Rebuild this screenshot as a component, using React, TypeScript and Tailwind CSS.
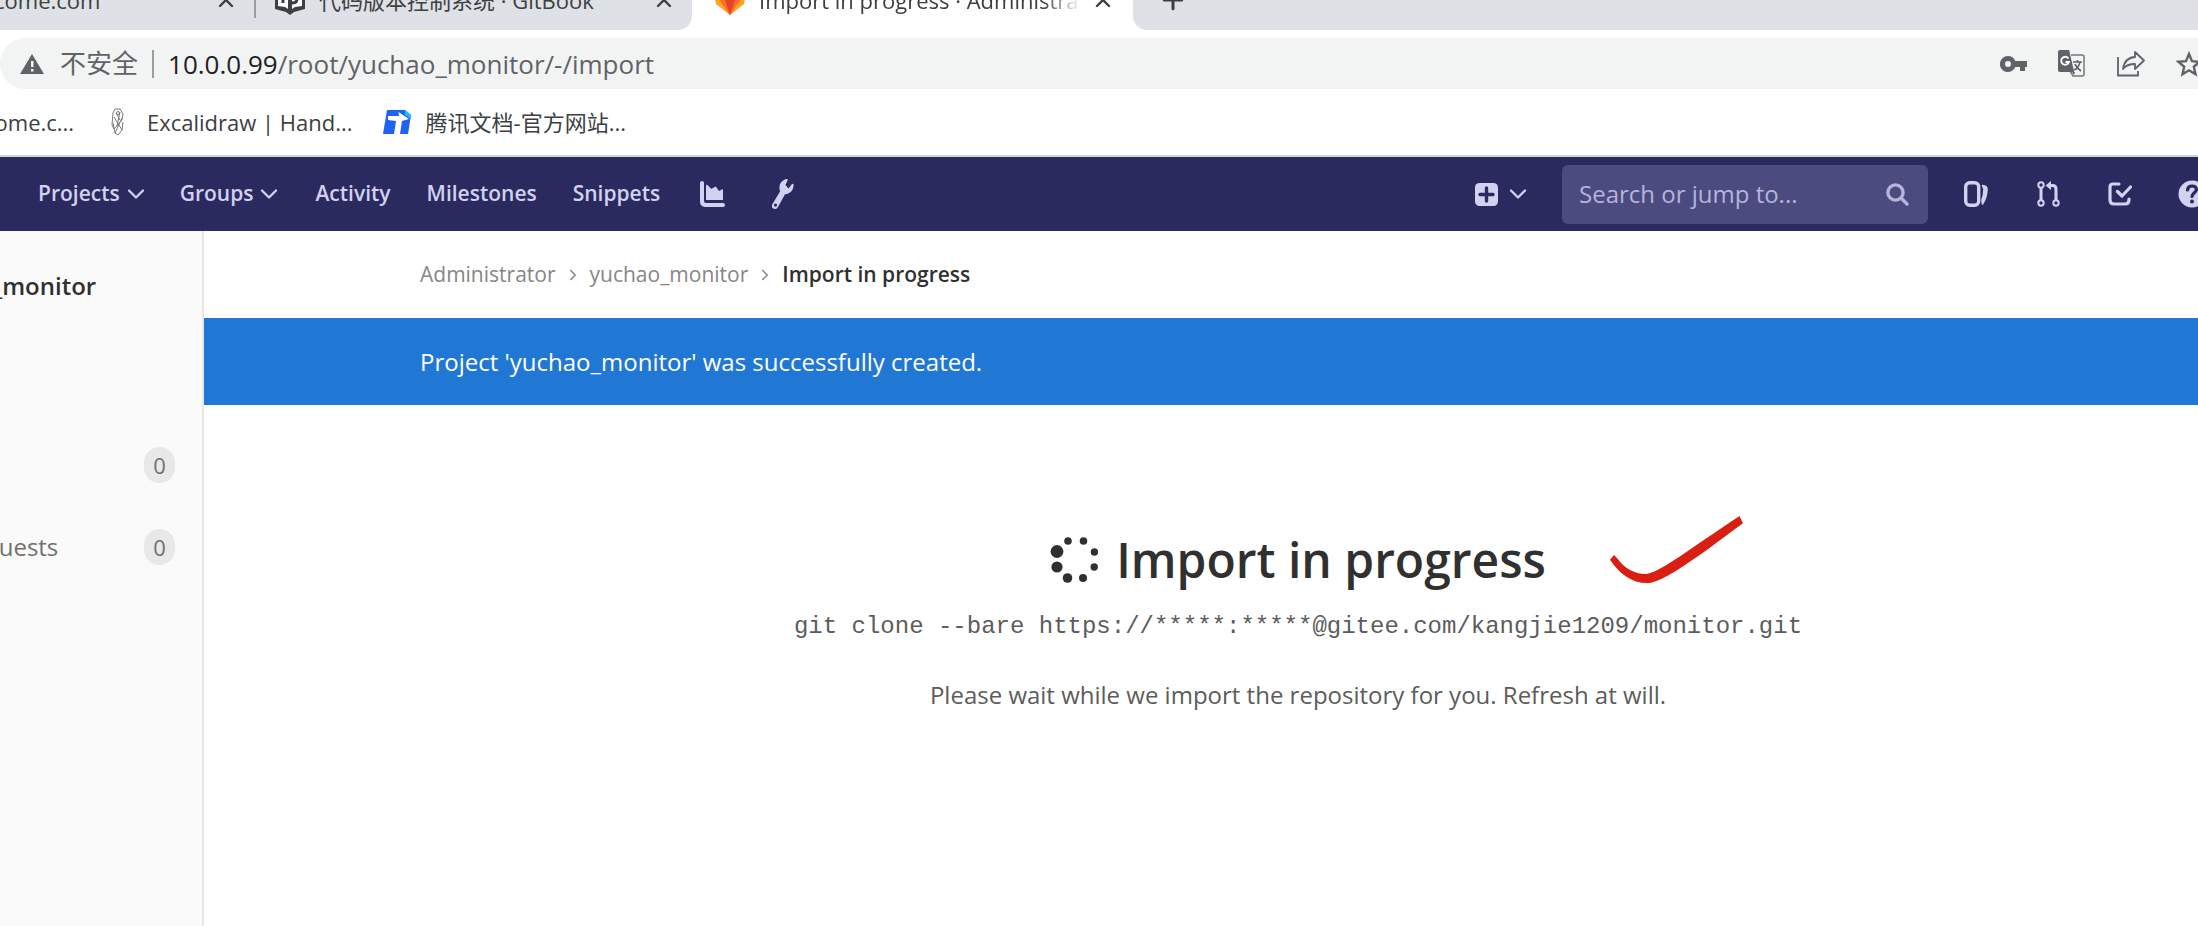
import React from 'react';
import { ChevronDown, ChevronRight, Plus, X } from 'lucide-react';

const sans = "font-['Open_Sans','Noto_Sans_CJK_SC',sans-serif]";

function GitBookIcon() {
  return (
    <svg width="30" height="28" viewBox="0 0 30 28" fill="none" className="shrink-0">
      <path d="M0 0h30v22l-11 3-4 3-4-3-11-3z" fill="#3c4043" />
      <path d="M3 0h10v22l-3-2-7-1zM27 0H17v22l3-2 7-1z" fill="#fff" />
      <path d="M8 0v16M22 0v12q0 4-5 4" stroke="#3c4043" strokeWidth="3" />
    </svg>
  );
}

function GitLabIcon() {
  return (
    <svg width="30" height="28" viewBox="0 0 30 28" className="shrink-0">
      <path d="M15 28 1 17 0 12 5 0l5 11h10l5-11 5 12-1 5z" fill="#fca326" />
      <path d="M15 28 3 11h24z" fill="#fc6d26" />
      <path d="M15 28 9.500 11h11z" fill="#e24329" />
    </svg>
  );
}

function TencentDocIcon() {
  return (
    <svg width="28" height="24" viewBox="0 0 28 24" className="shrink-0">
      <path d="M4 0h18l6 5-3 19H0z" fill="#1f62f5" />
      <path d="M22 0l6 5-1 3-5-3z" fill="#17c3f5" />
      <path d="M5 6h11l-.5-4L26 9l-7 2-2 13h-6l2-13-8-1z" fill="#fff" />
    </svg>
  );
}

function ExcalidrawIcon() {
  return (
    <svg width="14" height="28" viewBox="0 0 14 28" fill="none" stroke="#7a7a7a" strokeWidth="1" className="shrink-0">
      <path d="M4 1h5l3 5-1 6-8 9-2-4 1-12zM3 9l8 13M11 10 4 25l3 2 4-5 1-8M2 15l2 10M5 5l4 7M9 4 6 18" />
      <circle cx="7" cy="5" r="1.500" />
    </svg>
  );
}

function Tab({ icon, title, active }: { icon?: React.ReactNode; title: string; active?: boolean }) {
  return (
    <>
      {icon}
      <span
        className={
          active
            ? 'ml-[14px] w-[322px] overflow-hidden whitespace-nowrap [mask-image:linear-gradient(to_right,#000_88%,transparent)]'
            : 'ml-[14px] flex-1 whitespace-nowrap'
        }
      >
        {title}
      </span>
      <button aria-label="Close tab" className="mb-[3px] ml-auto">
        <X size={24} strokeWidth={2.4} />
      </button>
    </>
  );
}

function BrowserChrome() {
  return (
    <header className="text-[#3c4043]">
      <div className="flex h-[30px] items-end overflow-hidden bg-[#dee1e5] text-[22px] leading-[30px]">
        <div className="flex w-[254px] shrink-0 items-end justify-end pr-4 pb-[15px]">
          <span className="mr-auto -ml-[6px]">come.com</span>
          <button aria-label="Close tab" className="mb-[3px]">
            <X size={24} strokeWidth={2.4} />
          </button>
        </div>
        <div className="mb-3 h-[18px] w-[2px] shrink-0 bg-[#9a9da1]" />
        <div className="flex h-[30px] w-[436px] shrink-0 items-end bg-white">
          <div className="flex h-[30px] w-full items-end rounded-br-[14px] bg-[#dee1e5] pr-4 pb-[15px] pl-[19px]">
            <Tab icon={<GitBookIcon />} title="代码版本控制系统 · GitBook" />
          </div>
        </div>
        <div className="flex h-[30px] w-[441px] shrink-0 items-end bg-white pr-[18px] pb-[15px] pl-[23px]">
          <Tab active icon={<GitLabIcon />} title="Import in progress · Administrator" />
        </div>
        <div className="flex h-[30px] flex-1 bg-white">
          <div className="flex h-[30px] flex-1 items-end rounded-bl-[14px] bg-[#dee1e5] pb-[15px] pl-[25px]">
            <button aria-label="New tab">
              <Plus size={30} strokeWidth={2.4} />
            </button>
          </div>
        </div>
      </div>

      <div className="overflow-hidden bg-white pt-2">
        <div className="flex h-[51px] items-center rounded-l-full bg-[#f2f3f3] pl-5 text-[#5f6368]">
          <svg width="24" height="20" viewBox="0 0 24 20" className="shrink-0">
            <path d="M12 0 24 20H0z" fill="#5f6368" />
            <path d="M11 7h2.500v6H11zM11 15h2.500v2.500H11z" fill="#f2f3f3" />
          </svg>
          <span className="ml-4 text-[26px]">不安全</span>
          <div className="mx-[14px] h-7 w-[2px] bg-[#9a9da1]" />
          <div className="flex-1 text-[26px] leading-[48px] whitespace-nowrap">
            <span className="text-[#202124]">10.0.0.99</span>/root/yuchao_monitor/-/import
          </div>
          <div className="-mr-[4px] flex shrink-0 items-center gap-[31px]">
            <button aria-label="Passwords">
              <svg width="27" height="16" viewBox="0 0 27 16" fill="#5f6368">
                <path fillRule="evenodd" d="M8 0a8 8 0 0 1 7.300 5H27v6h-2v4h-5v-4h-4.700A8 8 0 1 1 8 0zm0 5a3 3 0 1 0 0 6 3 3 0 0 0 0-6z" />
              </svg>
            </button>
            <button aria-label="Translate">
              <svg width="28" height="27" viewBox="0 0 28 27">
                <path d="M13 5h11a2 2 0 0 1 2 2v17a2 2 0 0 1-2 2H15l-3-5" fill="#f2f3f3" stroke="#75797d" strokeWidth="1.500" />
                <path d="M2 0h9l5 21v1H2a2 2 0 0 1-2-2V2a2 2 0 0 1 2-2z" fill="#5f6368" />
                <path d="M2 0h9l3 22 2 3 1-3V22H2" fill="#5f6368" />
                <path d="M10.500 8.500a4 4 0 1 0 .5 3.500H7.500" fill="none" stroke="#fff" strokeWidth="1.800" />
                <path d="M15 12h9M19.500 10v2M22 12c-1 4-3 7-6 8M17 14c1 3 3 5 6 7" fill="none" stroke="#5f6368" strokeWidth="1.600" />
              </svg>
            </button>
            <button aria-label="Share">
              <svg width="28" height="27" viewBox="0 0 28 27" fill="none" stroke="#5f6368" strokeWidth="1.800">
                <path d="M1 7v18.500h20V21" />
                <path d="M18 2l9 8.500-9 8.500v-5c-5 0-9 1-12 5 1-7 5-11.500 12-12z" strokeLinejoin="round" />
              </svg>
            </button>
            <button aria-label="Bookmark">
              <svg width="26" height="26" viewBox="0 0 26 26" fill="none" stroke="#5f6368" strokeWidth="2.400">
                <path d="M13 3l3 7.200 7.500.6-5.700 5 1.700 7.500L13 19.300l-6.500 4 1.700-7.500-5.700-5 7.500-.6z" />
              </svg>
            </button>
          </div>
        </div>
        <nav aria-label="Bookmarks" className="flex h-[66px] items-center text-[22px]">
          <a href="#" className="-ml-4 w-[87px] whitespace-nowrap">come.c...</a>
          <a href="#" className="ml-10 flex items-center gap-[22px] whitespace-nowrap">
            <ExcalidrawIcon />
            Excalidraw | Hand...
          </a>
          <a href="#" className="ml-[30px] flex items-center gap-[15px] whitespace-nowrap">
            <TencentDocIcon />
            腾讯文档-官方网站...
          </a>
        </nav>
      </div>
    </header>
  );
}

function NavBar() {
  return (
    <nav className="flex h-[76px] items-center overflow-hidden border-t-2 border-[#cfd8d8] bg-[#2b2a5f] pl-[38px] text-[21px] font-semibold text-[#d1d1f0]">
      <button className="flex items-center gap-[2px]">
        Projects <ChevronDown size={28} />
      </button>
      <button className="ml-[30px] flex items-center gap-[2px]">
        Groups <ChevronDown size={28} />
      </button>
      <a href="#" className="ml-8">Activity</a>
      <a href="#" className="ml-9">Milestones</a>
      <a href="#" className="ml-9">Snippets</a>
      <a href="#" aria-label="Instance statistics" className="ml-10">
        <svg width="26" height="26" viewBox="0 0 26 26" fill="currentColor">
          <path d="M2 0a2 2 0 0 1 2 2v18a2 2 0 0 0 2 2h17a2 2 0 0 1 0 4H5a5 5 0 0 1-5-5V2a2 2 0 0 1 2-2z" />
          <path d="M6 5q0-2 1.500-1l4 4 3-2q1-1 2 .5L19 10l4-2v11H6z" />
        </svg>
      </a>
      <a href="#" aria-label="Admin area" className="ml-[46px]">
        <svg width="22" height="30" viewBox="0 0 22 30" fill="currentColor">
          <path fillRule="evenodd" d="M14 0q2-.5 1.500 1.500L13.500 6l3 3.500L20 5q2-1 1.500 2-.5 6-6.500 8l-2 .3L6 28q-1.500 3-4.500 1.500T.5 25L8 12.500Q5.500 3 14 0zM3.500 24.500a1.600 1.600 0 1 0 0 3.200 1.600 1.600 0 0 0 0-3.200z" />
        </svg>
      </a>

      <div className="-mr-2 ml-auto flex items-center">
        <button aria-label="New" className="flex items-center gap-[6px]">
          <svg width="23" height="23" viewBox="0 0 23 23">
            <rect width="23" height="23" rx="4.500" fill="currentColor" />
            <path d="M11.500 5v13M5 11.500h13" stroke="#2b2a5f" strokeWidth="3.400" strokeLinecap="round" />
          </svg>
          <ChevronDown size={28} />
        </button>
        <div className="ml-[30px] flex h-[59px] w-[366px] items-center rounded-md bg-[#4c4b7f] pr-[19px] pl-[17px]">
          <input
            aria-label="Search"
            placeholder="Search or jump to..."
            className="w-0 flex-1 bg-transparent text-[24px] font-normal outline-none placeholder:text-[#b4b4dc]"
          />
          <svg width="23" height="23" viewBox="0 0 23 23" fill="none" stroke="#b4b4dc" strokeWidth="3.400">
            <circle cx="9.500" cy="9.500" r="7.600" />
            <path d="M15 15l6 6" strokeLinecap="round" />
          </svg>
        </div>
        <a href="#" aria-label="Issues" className="ml-9">
          <svg width="25" height="26" viewBox="0 0 25 26" fill="none" stroke="currentColor">
            <rect x="1.700" y="1.700" width="13" height="22.600" rx="4" strokeWidth="3.400" />
            <path d="M18.500 4.500q5 .5 4.500 4.500-.5 8-4.500 14l-.5-4q2-5 2-11z" fill="currentColor" strokeWidth="1.600" strokeLinejoin="round" />
          </svg>
        </a>
        <a href="#" aria-label="Merge requests" className="ml-12">
          <svg width="23" height="26" viewBox="0 0 23 26" fill="none" stroke="currentColor" strokeWidth="2">
            <circle cx="4" cy="4" r="2.700" />
            <circle cx="4" cy="22" r="2.700" />
            <circle cx="19" cy="22" r="2.700" />
            <path d="M4 7v12M19 19V8q0-3.500-3.500-3.500H12" strokeWidth="3" />
            <path d="M14 0v9L8.500 4.500z" fill="currentColor" stroke="none" />
          </svg>
        </a>
        <a href="#" aria-label="To-Do List" className="ml-12">
          <svg width="24" height="24" viewBox="0 0 24 24" fill="none" stroke="currentColor" strokeWidth="3.200" strokeLinecap="round" strokeLinejoin="round">
            <path d="M11 2H5Q2 2 2 5v13q0 4 4 4h11q4 0 4-4v-1" />
            <path d="M9.500 9.500l4.500 4.500 8.500-9" />
          </svg>
        </a>
        <a href="#" aria-label="Help" className="ml-[46px]">
          <svg width="28" height="28" viewBox="0 0 28 28" fill="none">
            <circle cx="14" cy="14" r="13.500" fill="currentColor" />
            <path d="M9.500 10q.5-4 4.500-4t4.500 3.500c0 3-4.500 3.500-4.500 7" stroke="#2b2a5f" strokeWidth="3.200" strokeLinecap="round" />
            <circle cx="14" cy="21.500" r="2" fill="#2b2a5f" />
          </svg>
        </a>
      </div>
    </nav>
  );
}

function Count({ value }: { value: number }) {
  return (
    <span className="ml-auto flex h-9 w-[31px] items-center justify-center rounded-full bg-[#e8e8e8] text-[22px]">{value}</span>
  );
}

function Sidebar() {
  return (
    <aside className="w-[204px] shrink-0 overflow-hidden border-r-2 border-[#e6e6e6] bg-[#fafafa] pt-7 pr-[27px] text-[#707070]">
      <div className="-ml-2 text-[24px] leading-[54px] font-semibold text-[#303030]">_monitor</div>
      <a href="#" aria-label="Issues" className="mt-[111px] flex h-[82px] items-center">
        <Count value={0} />
      </a>
      <a href="#" aria-label="Merge requests" className="-ml-4 flex h-[82px] items-center text-[24px]">
        quests
        <Count value={0} />
      </a>
    </aside>
  );
}

const dots = [
  [18, 5, 3.8],
  [33.5, 5, 3.8],
  [44.4, 16, 3.7],
  [44.2, 31, 3.7],
  [33, 42, 4],
  [17.5, 42, 4.8],
  [7, 31, 5.6],
  [7, 15.500, 6.4],
];

function Spinner() {
  return (
    <svg width="48" height="48" viewBox="0 0 48 48" fill="#303030" className="shrink-0">
      {dots.map(([cx, cy, r]) => (
        <circle key={`${cx}-${cy}`} cx={cx} cy={cy} r={r} />
      ))}
    </svg>
  );
}

export default function App() {
  return (
    <div className={`flex min-h-screen flex-col overflow-hidden bg-white ${sans}`}>
      <BrowserChrome />
      <NavBar />
      <div className="flex flex-1">
        <Sidebar />
        <main className="min-w-0 flex-1">
          <nav aria-label="Breadcrumb" className="flex h-[87px] items-center pl-[216px] text-[21px] text-[#868686]">
            <a href="#">Administrator</a>
            <ChevronRight size={18} className="mx-2" />
            <a href="#">yuchao_monitor</a>
            <ChevronRight size={18} className="mx-2" />
            <span className="font-semibold text-[#303030]">Import in progress</span>
          </nav>
          <div role="status" className="flex h-[87px] items-center bg-[#2078d4] pl-[216px] text-[24px] text-white">
            Project 'yuchao_monitor' was successfully created.
          </div>
          <div className="flex flex-col items-center pt-[120px] pl-[194px] text-[#5c5c5c]">
            <div className="relative flex items-center gap-[18px]">
              <Spinner />
              <h1 className="text-[48px] leading-[70px] font-semibold text-[#303030]">Import in progress</h1>
              <svg width="136" height="70" viewBox="0 0 136 70" fill="#d91e12" className="absolute bottom-[11px] left-full ml-[62px]">
                <path d="M6 41l3 3C16 54 26 60 38 60 51 59 80 36 131.500 2L135 9.300C100 35 60 66 42 69 24 70 12 60 2 45.700z" />
              </svg>
            </div>
            <p className="font-['Liberation_Mono',monospace] text-[24px] leading-[64px] whitespace-nowrap">
              git clone --bare https://*****:*****@gitee.com/kangjie1209/monitor.git
            </p>
            <p className="text-[24px] leading-[72px]">Please wait while we import the repository for you. Refresh at will.</p>
          </div>
        </main>
      </div>
    </div>
  );
}
